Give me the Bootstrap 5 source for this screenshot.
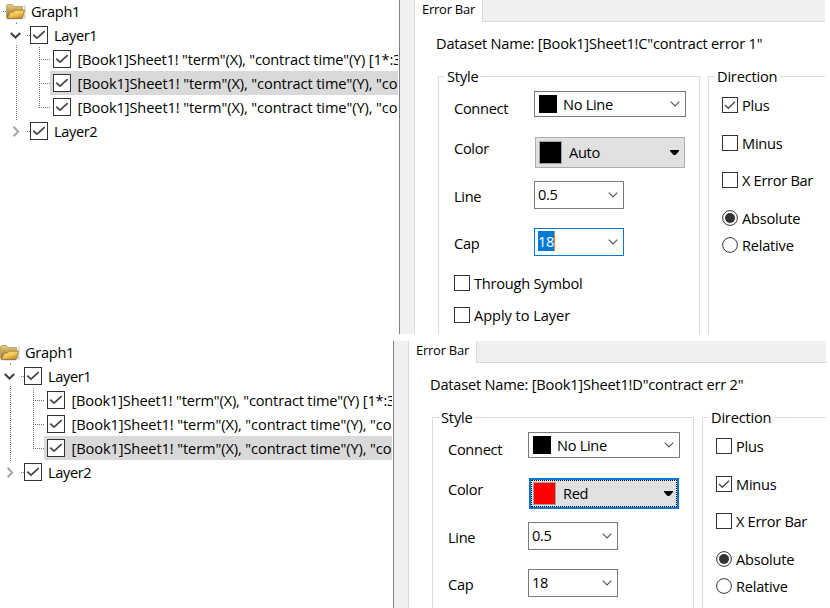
<!DOCTYPE html>
<html lang="en">
<head>
<meta charset="utf-8">
<title>Plot Details - Error Bar</title>
<meta name="viewport" content="width=device-width, initial-scale=1">
<link href="https://cdn.jsdelivr.net/npm/bootstrap@5.3.0/dist/css/bootstrap.min.css" rel="stylesheet">
<style>
  body { font: 14.6px/20px "Open Sans", "Noto Sans", sans-serif; letter-spacing: -.3px; color: #000; background: #fff; width: 830px; height: 608px; }
  svg { display: block; flex: none; }
  .pane { width: 825px; height: 334px; }
  .pane-b { width: 832px; height: 267px; margin: 7px 0 0 -6px; }
  .tree { width: 400px; border-right: 1px solid #82808c; padding-right: 1px; }
  .tree-in { margin-top: -1px; }
  .node { height: 24px; }
  .node .txt { line-height: 24px; }
  .node .lay { margin-left: 6px; letter-spacing: -.38px; }
  .leafbox { height: 24px; padding-left: 3px; }
  .leafbox.sel { background: #d9d9d9; }
  .leafbox .txt { margin-left: 6.5px; letter-spacing: -.09px; }
  .leafbox .rng { letter-spacing: -.17px; }
  .gutter { width: 14px; background: #f0f0f0; }
  .sheet { border-left: 1px solid #dadada; }
  .tabs { height: 22px; }
  .tab-on { width: 68px; border-right: 1px solid #dadada; padding-left: 7px; font-size: 13px; line-height: 19px; letter-spacing: -.25px; }
  .tab-rest { background: #f0f0f0; border-bottom: 1px solid #dadada; }
  .ds { margin: 11px 0 0 21px; line-height: 20px; letter-spacing: -.2px; }
  .groups { margin: 23px 0 0 23px; gap: 8px; }
  .grp { border: 1px solid #dcdcdc; border-bottom: 0; }
  .grp-style { width: 262px; padding-left: 15px; }
  .grp-dir { border-right: 0; padding-left: 13px; }
  .cap-t { display: table; background: #fff; margin-top: -11px; height: 20px; padding: 0 2px; }
  .grp-style .cap-t { margin-left: -9px; width: 36px; letter-spacing: -.15px; }
  .grp-dir .cap-t { margin-left: -7px; width: 65px; letter-spacing: -.2px; }
  .lab { width: 80px; }
  .r1 { margin-top: 5px; } .r1 .lab { padding-top: 7px; }
  .r2 { margin-top: 19px; } .r2 .lab { padding-top: 1px; width: 81px; }
  .r3 { margin-top: 13px; } .r3 .lab { padding-top: 5px; }
  .r4 { margin-top: 19px; } .r4 .lab { padding-top: 5px; }
  .combo { border: 1px solid #7a7a7a; background: #fff; }
  .combo.wide { width: 152px; height: 26px; padding: 0 5px 0 4px; }
  .combo.num { width: 90px; height: 28px; padding: 0 5px 0 3px; }
  .combo.focus { border-color: #0078d7; }
  .sw { width: 18px; height: 18px; background: #000; margin-right: 6px; }
  .pick { width: 150px; height: 31px; border: 1px solid #adadad; background: #e1e1e1; padding: 0 5px 0 3px; }
  .pick .sw { width: 23px; height: 23px; border: 1px solid #a0a0a0; margin-right: 7px; }
  .pick.focus { border: 2px solid #0078d7; padding: 0 4px 0 2px; outline: 1px dotted #000; outline-offset: -3px; }
  .pick .sw.red { background: #f00; }
  .pick span { margin-top: -2px; }
  .num .val { margin-top: -2px; }
  .num .val:not(.marked) { padding: 0; }
  .marked { background: #0078d7; color: #fff; border-right: 1px solid #ff8728; }
  .opt { height: 16px; line-height: 16px; gap: 4px; letter-spacing: -.22px; }
  .o1 { margin-top: 19px; } .o2 { margin-top: 16px; letter-spacing: -.05px; }
  .d1 { margin-top: 11px; } .d2 { margin-top: 22px; } .d3 { margin-top: 21px; letter-spacing: -.3px; } .d4 { margin-top: 22px; } .d5 { margin-top: 11px; }
</style>
<script src="https://cdn.jsdelivr.net/npm/bootstrap@5.3.0/dist/js/bootstrap.bundle.min.js"></script>
</head>
<body>
<svg width="0" height="0" class="position-absolute">
  <defs>
    <linearGradient id="gold" x1="0" y1="0" x2=".6" y2="1"><stop offset="0" stop-color="#ffeb9c"/><stop offset=".6" stop-color="#f2c454"/><stop offset="1" stop-color="#c78f27"/></linearGradient>
    <linearGradient id="back" x1="0" y1="0" x2="0" y2="1"><stop offset="0" stop-color="#ecca7c"/><stop offset="1" stop-color="#8d6b2c"/></linearGradient>
    <symbol id="folder" viewBox="0 0 31 24">
      <path d="M3 12.500h3M16.500 23.500v1" stroke="#777" stroke-dasharray="1 1"/>
      <path d="M6.500 18.500V6.800Q6.500 5.500 8 5.500h4.500l1.500 2h8.500V11l-1 8H7z" fill="url(#back)" stroke="#b59a63" stroke-width=".8"/>
      <path d="M24.300 6.500h1.200v13H22z" fill="#cfcfcf"/>
      <path d="M7.200 19.500 10.400 13.300l3.200-.4 1.400-1.700h9.500L22 19.500z" fill="url(#gold)" stroke="#a97b25" stroke-width=".8"/>
      <path d="M7.500 19.700h14.500" stroke="#8b7a5c" stroke-width="1"/>
    </symbol>
    <symbol id="ck18" viewBox="0 0 18 18">
      <rect x=".5" y=".5" width="17" height="17" fill="#fff" stroke="#333"/>
      <path d="M3.300 8.700 7 12.200 14.700 5.200" fill="none" stroke="#444" stroke-width="1.700"/>
    </symbol>
    <symbol id="ck16" viewBox="0 0 16 16">
      <rect x=".5" y=".5" width="15" height="15" fill="#fff" stroke="#333"/>
      <path d="M3 8 6.300 11.300 13 4.700" fill="none" stroke="#444" stroke-width="1.300"/>
    </symbol>
    <symbol id="box16" viewBox="0 0 16 16"><rect x=".5" y=".5" width="15" height="15" fill="#fff" stroke="#333"/></symbol>
    <symbol id="rad0" viewBox="0 0 16 16"><circle cx="8" cy="8" r="7.400" fill="#fff" stroke="#333"/></symbol>
    <symbol id="rad1" viewBox="0 0 16 16"><circle cx="8" cy="8" r="7.400" fill="#fff" stroke="#333"/><circle cx="8" cy="8" r="5" fill="#333"/></symbol>
    <symbol id="open" viewBox="0 0 30 24">
      <path d="M10.800 10 15.500 14.500 20.200 10" fill="none" stroke="#404040" stroke-width="2"/>
      <path d="M27 12.500h3M16.500 0v1M16.500 22v1" stroke="#777" stroke-dasharray="1 1"/>
    </symbol>
    <symbol id="shut" viewBox="0 0 30 24">
      <path d="M13.600 7.800 18.200 12.500 13.600 17.200" fill="none" stroke="#a6a6a6" stroke-width="2"/>
      <path d="M27 12.500h3M16.500 0v1" stroke="#777" stroke-dasharray="1 1"/>
    </symbol>
    <symbol id="mid" viewBox="0 0 50 24"><path d="M16.500 0v24M39.500 0v24M41 12.500h9" fill="none" stroke="#777" stroke-dasharray="1 1"/></symbol>
    <symbol id="end" viewBox="0 0 50 24"><path d="M16.500 0v24M39.500 0v13M41 12.500h9" fill="none" stroke="#777" stroke-dasharray="1 1"/></symbol>
    <symbol id="chev" viewBox="0 0 10 6"><path d="M.7.700 5 5 9.300.700" fill="none" stroke="#555" stroke-width="1.100"/></symbol>
    <symbol id="tri" viewBox="0 0 9 5"><path d="M0 0h9v1L5.500 5h-2L0 1z" fill="#000"/></symbol>
  </defs>
</svg>

<section class="pane d-flex overflow-hidden">
  <div class="tree flex-shrink-0 overflow-hidden text-nowrap">
    <div class="tree-in">
      <div class="node d-flex"><svg width="31" height="24"><use href="#folder"/></svg><span class="txt">Graph1</span></div>
      <div class="node d-flex align-items-center"><svg width="30" height="24"><use href="#open"/></svg><svg width="18" height="18"><use href="#ck18"/></svg><span class="txt lay">Layer1</span></div>
      <div class="node d-flex"><svg width="50" height="24"><use href="#mid"/></svg><div class="leafbox d-flex align-items-center flex-grow-1 overflow-hidden"><svg width="18" height="18"><use href="#ck18"/></svg><span class="txt rng">[Book1]Sheet1! "term"(X), "contract time"(Y) [1*:3</span></div></div>
      <div class="node d-flex"><svg width="50" height="24"><use href="#mid"/></svg><div class="leafbox sel d-flex align-items-center flex-grow-1 overflow-hidden"><svg width="18" height="18"><use href="#ck18"/></svg><span class="txt">[Book1]Sheet1! "term"(X), "contract time"(Y), "co</span></div></div>
      <div class="node d-flex"><svg width="50" height="24"><use href="#end"/></svg><div class="leafbox d-flex align-items-center flex-grow-1 overflow-hidden"><svg width="18" height="18"><use href="#ck18"/></svg><span class="txt">[Book1]Sheet1! "term"(X), "contract time"(Y), "co</span></div></div>
      <div class="node d-flex align-items-center"><svg width="30" height="24"><use href="#shut"/></svg><svg width="18" height="18"><use href="#ck18"/></svg><span class="txt lay">Layer2</span></div>
    </div>
  </div>
  <div class="gutter flex-shrink-0"></div>
  <div class="sheet d-flex flex-column flex-grow-1 text-nowrap">
    <div class="tabs d-flex flex-shrink-0"><div class="tab-on">Error Bar</div><div class="tab-rest flex-grow-1"></div></div>
    <div class="ds">Dataset Name: [Book1]Sheet1!C"contract error 1"</div>
    <div class="groups d-flex flex-grow-1">
      <div class="grp grp-style flex-shrink-0">
        <div class="cap-t">Style</div>
        <div class="r1 d-flex align-items-start"><div class="lab">Connect</div><div class="combo wide d-flex align-items-center"><div class="sw"></div><span class="flex-grow-1">No Line</span><svg width="10" height="6"><use href="#chev"/></svg></div></div>
        <div class="r2 d-flex align-items-start"><div class="lab">Color</div><div class="pick d-flex align-items-center"><div class="sw"></div><span class="flex-grow-1">Auto</span><svg width="9" height="5"><use href="#tri"/></svg></div></div>
        <div class="r3 d-flex align-items-start"><div class="lab">Line</div><div class="combo num d-flex align-items-center justify-content-between"><span class="val">0.5</span><svg width="10" height="6"><use href="#chev"/></svg></div></div>
        <div class="r4 d-flex align-items-start"><div class="lab">Cap</div><div class="combo num focus d-flex align-items-center justify-content-between"><span class="val marked">18</span><svg width="10" height="6"><use href="#chev"/></svg></div></div>
        <div class="opt o1 d-flex"><svg width="16" height="16"><use href="#box16"/></svg>Through Symbol</div>
        <div class="opt o2 d-flex"><svg width="16" height="16"><use href="#box16"/></svg>Apply to Layer</div>
      </div>
      <div class="grp grp-dir flex-grow-1">
        <div class="cap-t">Direction</div>
        <div class="opt d1 d-flex"><svg width="16" height="16"><use href="#ck16"/></svg>Plus</div>
        <div class="opt d2 d-flex"><svg width="16" height="16"><use href="#box16"/></svg>Minus</div>
        <div class="opt d3 d-flex"><svg width="16" height="16"><use href="#box16"/></svg>X Error Bar</div>
        <div class="opt d4 d-flex"><svg width="16" height="16"><use href="#rad1"/></svg>Absolute</div>
        <div class="opt d5 d-flex"><svg width="16" height="16"><use href="#rad0"/></svg>Relative</div>
      </div>
    </div>
  </div>
</section>

<section class="pane pane-b d-flex overflow-hidden">
  <div class="tree flex-shrink-0 overflow-hidden text-nowrap">
    <div class="tree-in">
      <div class="node d-flex"><svg width="31" height="24"><use href="#folder"/></svg><span class="txt">Graph1</span></div>
      <div class="node d-flex align-items-center"><svg width="30" height="24"><use href="#open"/></svg><svg width="18" height="18"><use href="#ck18"/></svg><span class="txt lay">Layer1</span></div>
      <div class="node d-flex"><svg width="50" height="24"><use href="#mid"/></svg><div class="leafbox d-flex align-items-center flex-grow-1 overflow-hidden"><svg width="18" height="18"><use href="#ck18"/></svg><span class="txt rng">[Book1]Sheet1! "term"(X), "contract time"(Y) [1*:3</span></div></div>
      <div class="node d-flex"><svg width="50" height="24"><use href="#mid"/></svg><div class="leafbox d-flex align-items-center flex-grow-1 overflow-hidden"><svg width="18" height="18"><use href="#ck18"/></svg><span class="txt">[Book1]Sheet1! "term"(X), "contract time"(Y), "co</span></div></div>
      <div class="node d-flex"><svg width="50" height="24"><use href="#end"/></svg><div class="leafbox sel d-flex align-items-center flex-grow-1 overflow-hidden"><svg width="18" height="18"><use href="#ck18"/></svg><span class="txt">[Book1]Sheet1! "term"(X), "contract time"(Y), "co</span></div></div>
      <div class="node d-flex align-items-center"><svg width="30" height="24"><use href="#shut"/></svg><svg width="18" height="18"><use href="#ck18"/></svg><span class="txt lay">Layer2</span></div>
    </div>
  </div>
  <div class="gutter flex-shrink-0"></div>
  <div class="sheet d-flex flex-column flex-grow-1 text-nowrap">
    <div class="tabs d-flex flex-shrink-0"><div class="tab-on">Error Bar</div><div class="tab-rest flex-grow-1"></div></div>
    <div class="ds">Dataset Name: [Book1]Sheet1!D"contract err 2"</div>
    <div class="groups d-flex flex-grow-1">
      <div class="grp grp-style flex-shrink-0">
        <div class="cap-t">Style</div>
        <div class="r1 d-flex align-items-start"><div class="lab">Connect</div><div class="combo wide d-flex align-items-center"><div class="sw"></div><span class="flex-grow-1">No Line</span><svg width="10" height="6"><use href="#chev"/></svg></div></div>
        <div class="r2 d-flex align-items-start"><div class="lab">Color</div><div class="pick focus d-flex align-items-center"><div class="sw red"></div><span class="flex-grow-1">Red</span><svg width="9" height="5"><use href="#tri"/></svg></div></div>
        <div class="r3 d-flex align-items-start"><div class="lab">Line</div><div class="combo num d-flex align-items-center justify-content-between"><span class="val">0.5</span><svg width="10" height="6"><use href="#chev"/></svg></div></div>
        <div class="r4 d-flex align-items-start"><div class="lab">Cap</div><div class="combo num d-flex align-items-center justify-content-between"><span class="val">18</span><svg width="10" height="6"><use href="#chev"/></svg></div></div>
      </div>
      <div class="grp grp-dir flex-grow-1">
        <div class="cap-t">Direction</div>
        <div class="opt d1 d-flex"><svg width="16" height="16"><use href="#box16"/></svg>Plus</div>
        <div class="opt d2 d-flex"><svg width="16" height="16"><use href="#ck16"/></svg>Minus</div>
        <div class="opt d3 d-flex"><svg width="16" height="16"><use href="#box16"/></svg>X Error Bar</div>
        <div class="opt d4 d-flex"><svg width="16" height="16"><use href="#rad1"/></svg>Absolute</div>
        <div class="opt d5 d-flex"><svg width="16" height="16"><use href="#rad0"/></svg>Relative</div>
      </div>
    </div>
  </div>
</section>
</body>
</html>
